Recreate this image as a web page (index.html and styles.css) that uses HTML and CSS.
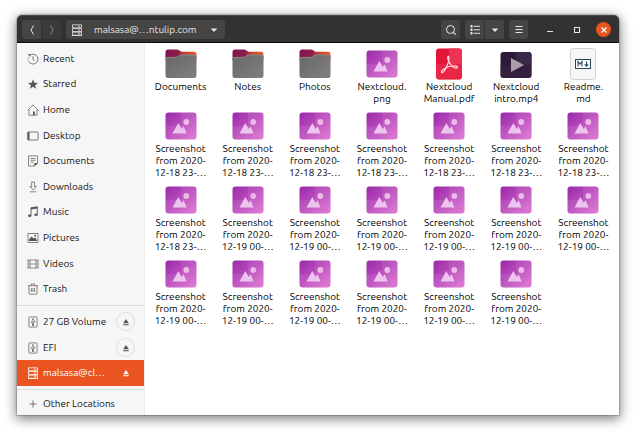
FILE: index.html
```
<!DOCTYPE html>
<html lang="en">
<head>
<meta charset="utf-8">
<meta name="viewport" content="width=device-width, initial-scale=1">
<title>Files</title>
<link rel="stylesheet" href="styles.css">
</head>
<body>
<svg class="sprite" aria-hidden="true">
  <defs>
    <linearGradient id="g-image" x1="0" y1="0" x2="1" y2="1"><stop offset="0" stop-color="#9a2baa"/><stop offset=".5" stop-color="#bb4cbd"/><stop offset="1" stop-color="#de73d2"/></linearGradient>
    <linearGradient id="g-tab" x1="0" y1="0" x2="1" y2="0"><stop offset="0" stop-color="#7c1550"/><stop offset=".4" stop-color="#8e1d4b"/><stop offset=".6" stop-color="#c4402f"/><stop offset="1" stop-color="#f05a1c"/></linearGradient>
    <linearGradient id="g-folder" x1="0" y1="0" x2="1" y2="1"><stop offset="0" stop-color="#676767"/><stop offset="1" stop-color="#808080"/></linearGradient>
  </defs>
  <symbol id="folder" viewBox="0 0 32 32">
    <path d="M.5 8V4q0-2.500 2.500-2.500H12q1.500 0 2.500 1t2.500 1.200h12q2.500 0 2.500 2.500v6H.5z" fill="url(#g-tab)"/>
    <path d="M.5 11.300q0-2.300 2.300-2.300H11q2 0 3-1.200t3-1.200h11.700Q31.500 6.600 31.500 9.100V27.500q0 2.500-2.500 2.500H3Q.5 30 .5 27.500z" fill="url(#g-folder)"/>
    <path d="M1 11.300q0-1.900 1.900-1.900H11q2.100 0 3.200-1.200T17 7h12q2 0 2 2" fill="none" stroke="#949494" stroke-width=".7"/>
  </symbol>
  <symbol id="image" viewBox="0 0 32 32">
    <rect x=".5" y="2.500" width="31" height="27" rx="3" fill="url(#g-image)"/>
    <path d="M16 2.500h12.500q3 0 3 3V16H16z" fill="#fff" opacity=".08"/>
    <path d="M.5 16h31v10.500q0 3-3 3h-25q-3 0-3-3z" fill="#fff" opacity=".08"/>
    <path d="M7.500 23.500 13.300 13l3.500 6 1.800-2.800 3 7.300z" fill="#edc4ed"/>
    <circle cx="21.300" cy="12" r="2.900" fill="#edb9e9"/>
  </symbol>
  <symbol id="pdf" viewBox="0 0 32 32">
    <rect x="3" y=".5" width="26" height="31" rx="3" fill="#e3163a"/>
    <path d="M16 .5h10q3 0 3 3V16H16z" fill="#ec3452"/><path d="M3 16h26v12.500q0 3-3 3H6q-3 0-3-3z" fill="#ef3650" opacity=".5"/>
    <path d="M15.200 8.300c-1.500 1 .5 7 4 10 2.500 2.200 5.300 2.500 5.200.7-.3-1.800-7.600-1.200-11.300.7-3.500 1.800-5.500 4-4.400 4.900 1.300.8 4.100-3.300 5.800-7.800 1.600-4.300 2-8.700.7-8.500z" fill="none" stroke="#ffe1e5" stroke-width="1.100"/>
  </symbol>
  <symbol id="video" viewBox="0 0 32 32">
    <rect x=".5" y="4" width="31" height="26" rx="3" fill="#2d1a39"/>
    <path d="M16 4h12.500q3 0 3 3v10H16z" fill="#3a2848"/><path d="M.5 17h31v10q0 3-3 3h-25q-3 0-3-3z" fill="#382440" opacity=".7"/>
    <path d="M11 10v14l13-7z" fill="#a99ead"/>
  </symbol>
  <symbol id="markdown" viewBox="0 0 32 32">
    <rect x="3.500" y=".5" width="25" height="31" rx="3" fill="#f6f6f6" stroke="#cfcfcf"/>
    <rect x="8.500" y="11.500" width="15" height="9" fill="#fff" stroke="#24475a"/>
    <path d="M11 18.500v-5l2 2.500 2-2.500v5M19.500 13.500v4M17.700 16.300l1.800 2 1.800-2" fill="none" stroke="#24475a" stroke-width="1.100"/>
  </symbol>
  <symbol id="server" viewBox="0 0 12 12">
    <path d="M1.500.8h9v3h-9zM1.500 4.500h9v3h-9zM1.500 8.200h9v3h-9zM7 2.300h2M7 6h2M7 9.700h2M1 11.500h10" fill="none" stroke="currentColor" stroke-width=".8"/>
  </symbol>
  <symbol id="recent" viewBox="0 0 12 12">
    <path d="M3.500 1.900A4.900 4.900 0 1 1 2.200 9.200" fill="none" stroke="currentColor" stroke-width=".8"/><path d="M2.200 9.200A4.900 4.900 0 0 1 2 3.500" fill="none" stroke="currentColor" stroke-width=".8" stroke-dasharray="1 1"/><path d="M.7 1.300h2.600v2.600z" fill="currentColor"/><path d="M6 3.300v3L7.300 8" fill="none" stroke="currentColor" stroke-width=".8"/>
  </symbol>
  <symbol id="star" viewBox="0 0 12 12"><path d="m6 1.200 1.300 3.500 3.700.2-2.900 2.300 1 3.600L6 8.800l-3.100 2 1-3.600L1 4.900l3.700-.2z" fill="currentColor"/></symbol>
  <symbol id="home" viewBox="0 0 12 12"><path d="M.5 6.500 6 1l5.500 5.500M2 5.500v5.700h8V5.500" fill="none" stroke="currentColor" stroke-width=".7"/><path d="M6 7.500h1.800V11H6z" fill="currentColor"/></symbol>
  <symbol id="desktop" viewBox="0 0 12 12"><rect x=".9" y="2" width="10.200" height="8" rx=".8" fill="none" stroke="currentColor" stroke-width=".8"/><path d="M.5 2h2v8h-2z" fill="currentColor"/></symbol>
  <symbol id="document" viewBox="0 0 12 12"><path d="M1.500.9h9v7.300L7.800 11H1.500zM3.500 3.500h5M3.500 5.300h5M3.500 7.200h3" fill="none" stroke="currentColor" stroke-width=".7"/><path d="M7.300 11.300V8h3.500z" fill="currentColor"/></symbol>
  <symbol id="download" viewBox="0 0 12 12"><path d="M4.700 1h2.800v4.500h1.800L6.100 9 2.900 5.500h1.800zM3 10.800h6.200" fill="none" stroke="currentColor" stroke-width=".7"/></symbol>
  <symbol id="music" viewBox="0 0 12 12"><path d="M4 9.500V1.800L10.300 1v7.500" fill="none" stroke="currentColor" stroke-width=".9"/><path d="m4 1.400 6.500-.9v2L4 3.400z" fill="currentColor"/><ellipse cx="2.700" cy="9.700" rx="1.700" ry="1.300" fill="currentColor"/><ellipse cx="9" cy="8.700" rx="1.700" ry="1.300" fill="currentColor"/></symbol>
  <symbol id="picture" viewBox="0 0 12 12"><path d="M1 1.500h10v9H1z" fill="none" stroke="currentColor" stroke-width=".7"/><path d="M2 9V7.500l2.600-3 2 2 1.200-1L10 8v1z" fill="currentColor"/><circle cx="8.200" cy="3.700" r=".9" fill="currentColor"/></symbol>
  <symbol id="film" viewBox="0 0 12 12"><path d="M1 1v10M11 1v10M3 1v10M9 1v10M3 2h6M3 6h6M3 10h6M1 3h2M1 6h2M1 9h2M9 3h2M9 6h2M9 9h2" fill="none" stroke="currentColor" stroke-width=".6"/></symbol>
  <symbol id="trash" viewBox="0 0 12 12"><path d="M1 2.700h10M4.300 2.500V1h3.400v1.500M2 2.700v7.500q0 1 1 1h6q1 0 1-1V2.700M4.400 5v4M6 5v4M7.600 5v4" fill="none" stroke="currentColor" stroke-width=".7"/></symbol>
  <symbol id="drive" viewBox="0 0 12 12"><rect x="1.900" y=".9" width="8.200" height="10.200" rx=".8" fill="none" stroke="currentColor" stroke-width=".7"/><path d="M6 3v6M4.300 5v1.500L6 7.500M7.700 4.500V6L6 7" fill="none" stroke="currentColor" stroke-width=".7"/><path d="M4.900 3.500 6 2l1.100 1.500z" fill="currentColor"/><circle cx="6" cy="9" r=".9" fill="currentColor"/></symbol>
  <symbol id="plus" viewBox="0 0 12 12"><path d="M6 2.500v7M2.500 6h7" stroke="currentColor" stroke-width=".8"/></symbol>
  <symbol id="eject" viewBox="0 0 12 12"><path d="M6 3 8.800 7.300H3.200zM3.200 8.200h5.600v1H3.200z" fill="currentColor"/></symbol>
  <symbol id="back" viewBox="0 0 12 12"><path d="M7.500 1.500 5 6l2.500 4.500" fill="none" stroke="currentColor"/></symbol>
  <symbol id="forward" viewBox="0 0 12 12"><path d="M4.500 1.500 7 6l-2.500 4.500" fill="none" stroke="currentColor"/></symbol>
  <symbol id="caret" viewBox="0 0 12 12"><path d="M2.700 4.500h6.600L6 8z" fill="currentColor"/></symbol>
  <symbol id="search" viewBox="0 0 12 12"><circle cx="5.500" cy="5.500" r="4" fill="none" stroke="currentColor"/><path d="m8.300 8.300 2.400 2.400" stroke="currentColor" stroke-width="1.200"/></symbol>
  <symbol id="list" viewBox="0 0 12 12"><path d="M1.500 1h2v2.500h-2zM1.500 4.500h2V7h-2zM1.500 8h2v2.500h-2z" fill="currentColor"/><path d="M4.500 2.300H11M4.500 5.800H11M4.500 9.300H11" stroke="currentColor"/></symbol>
  <symbol id="menu" viewBox="0 0 12 12"><path d="M2.500 2.500h7M2.500 5.500h7M2.500 8.500h7" stroke="currentColor"/></symbol>
  <symbol id="minimize" viewBox="0 0 12 12"><path d="M3 7.500h6" stroke="currentColor"/></symbol>
  <symbol id="maximize" viewBox="0 0 12 12"><path d="M3.500 3.500h5v5h-5z" fill="none" stroke="currentColor" stroke-width="1.100"/></symbol>
  <symbol id="close" viewBox="0 0 12 12"><path d="m3.500 3.500 5 5m0-5-5 5" stroke="currentColor" stroke-width="1.200"/></symbol>
</svg>

<div class="window">
  <header class="titlebar">
    <div class="group">
      <button class="tool" aria-label="Back"><svg class="icon"><use href="#back"/></svg></button>
      <button class="tool dim" aria-label="Forward"><svg class="icon"><use href="#forward"/></svg></button>
    </div>
    <button class="tool path"><svg class="icon"><use href="#server"/></svg><span>malsasa@…ntulip.com</span><svg class="icon"><use href="#caret"/></svg></button>
    <div class="spacer"></div>
    <button class="tool" aria-label="Search"><svg class="icon"><use href="#search"/></svg></button>
    <div class="group">
      <button class="tool" aria-label="List view"><svg class="icon"><use href="#list"/></svg></button>
      <button class="tool" aria-label="View options"><svg class="icon"><use href="#caret"/></svg></button>
    </div>
    <button class="tool" aria-label="Menu"><svg class="icon"><use href="#menu"/></svg></button>
    <div class="controls">
      <button class="control" aria-label="Minimize"><svg class="icon"><use href="#minimize"/></svg></button>
      <button class="control" aria-label="Maximize"><svg class="icon"><use href="#maximize"/></svg></button>
      <button class="control close" aria-label="Close"><svg class="icon"><use href="#close"/></svg></button>
    </div>
  </header>
  <div class="content">
    <nav class="sidebar">
      <ul class="places">
        <li class="place"><a href="#"><svg class="icon"><use href="#recent"/></svg>Recent</a></li>
        <li class="place"><a href="#"><svg class="icon"><use href="#star"/></svg>Starred</a></li>
        <li class="place"><a href="#"><svg class="icon"><use href="#home"/></svg>Home</a></li>
        <li class="place"><a href="#"><svg class="icon"><use href="#desktop"/></svg>Desktop</a></li>
        <li class="place"><a href="#"><svg class="icon"><use href="#document"/></svg>Documents</a></li>
        <li class="place"><a href="#"><svg class="icon"><use href="#download"/></svg>Downloads</a></li>
        <li class="place"><a href="#"><svg class="icon"><use href="#music"/></svg>Music</a></li>
        <li class="place"><a href="#"><svg class="icon"><use href="#picture"/></svg>Pictures</a></li>
        <li class="place"><a href="#"><svg class="icon"><use href="#film"/></svg>Videos</a></li>
        <li class="place"><a href="#"><svg class="icon"><use href="#trash"/></svg>Trash</a></li>
      </ul>
      <ul class="volumes">
        <li class="place"><a href="#"><svg class="icon"><use href="#drive"/></svg>27 GB Volume</a><button class="eject" aria-label="Eject 27 GB Volume"><svg class="icon"><use href="#eject"/></svg></button></li>
        <li class="place"><a href="#"><svg class="icon"><use href="#drive"/></svg>EFI</a><button class="eject" aria-label="Eject EFI"><svg class="icon"><use href="#eject"/></svg></button></li>
        <li class="place selected"><a href="#"><svg class="icon"><use href="#server"/></svg>malsasa@cl…</a><button class="eject" aria-label="Disconnect"><svg class="icon"><use href="#eject"/></svg></button></li>
      </ul>
      <ul class="other">
        <li class="place"><a href="#"><svg class="icon"><use href="#plus"/></svg>Other Locations</a></li>
      </ul>
    </nav>
    <main class="files">
      <figure class="file"><svg class="thumb"><use href="#folder"/></svg><figcaption>Documents</figcaption></figure>
      <figure class="file"><svg class="thumb"><use href="#folder"/></svg><figcaption>Notes</figcaption></figure>
      <figure class="file"><svg class="thumb"><use href="#folder"/></svg><figcaption>Photos</figcaption></figure>
      <figure class="file"><svg class="thumb"><use href="#image"/></svg><figcaption>Nextcloud.<br>png</figcaption></figure>
      <figure class="file"><svg class="thumb"><use href="#pdf"/></svg><figcaption>Nextcloud<br>Manual.pdf</figcaption></figure>
      <figure class="file"><svg class="thumb"><use href="#video"/></svg><figcaption>Nextcloud<br>intro.mp4</figcaption></figure>
      <figure class="file"><svg class="thumb"><use href="#markdown"/></svg><figcaption>Readme.<br>md</figcaption></figure>

      <figure class="file"><svg class="thumb"><use href="#image"/></svg><figcaption>Screenshot<br>from 2020-<br>12-18 23-…</figcaption></figure>
      <figure class="file"><svg class="thumb"><use href="#image"/></svg><figcaption>Screenshot<br>from 2020-<br>12-18 23-…</figcaption></figure>
      <figure class="file"><svg class="thumb"><use href="#image"/></svg><figcaption>Screenshot<br>from 2020-<br>12-18 23-…</figcaption></figure>
      <figure class="file"><svg class="thumb"><use href="#image"/></svg><figcaption>Screenshot<br>from 2020-<br>12-18 23-…</figcaption></figure>
      <figure class="file"><svg class="thumb"><use href="#image"/></svg><figcaption>Screenshot<br>from 2020-<br>12-18 23-…</figcaption></figure>
      <figure class="file"><svg class="thumb"><use href="#image"/></svg><figcaption>Screenshot<br>from 2020-<br>12-18 23-…</figcaption></figure>
      <figure class="file"><svg class="thumb"><use href="#image"/></svg><figcaption>Screenshot<br>from 2020-<br>12-18 23-…</figcaption></figure>

      <figure class="file"><svg class="thumb"><use href="#image"/></svg><figcaption>Screenshot<br>from 2020-<br>12-18 23-…</figcaption></figure>
      <figure class="file"><svg class="thumb"><use href="#image"/></svg><figcaption>Screenshot<br>from 2020-<br>12-19 00-…</figcaption></figure>
      <figure class="file"><svg class="thumb"><use href="#image"/></svg><figcaption>Screenshot<br>from 2020-<br>12-19 00-…</figcaption></figure>
      <figure class="file"><svg class="thumb"><use href="#image"/></svg><figcaption>Screenshot<br>from 2020-<br>12-19 00-…</figcaption></figure>
      <figure class="file"><svg class="thumb"><use href="#image"/></svg><figcaption>Screenshot<br>from 2020-<br>12-19 00-…</figcaption></figure>
      <figure class="file"><svg class="thumb"><use href="#image"/></svg><figcaption>Screenshot<br>from 2020-<br>12-19 00-…</figcaption></figure>
      <figure class="file"><svg class="thumb"><use href="#image"/></svg><figcaption>Screenshot<br>from 2020-<br>12-19 00-…</figcaption></figure>

      <figure class="file"><svg class="thumb"><use href="#image"/></svg><figcaption>Screenshot<br>from 2020-<br>12-19 00-…</figcaption></figure>
      <figure class="file"><svg class="thumb"><use href="#image"/></svg><figcaption>Screenshot<br>from 2020-<br>12-19 00-…</figcaption></figure>
      <figure class="file"><svg class="thumb"><use href="#image"/></svg><figcaption>Screenshot<br>from 2020-<br>12-19 00-…</figcaption></figure>
      <figure class="file"><svg class="thumb"><use href="#image"/></svg><figcaption>Screenshot<br>from 2020-<br>12-19 00-…</figcaption></figure>
      <figure class="file"><svg class="thumb"><use href="#image"/></svg><figcaption>Screenshot<br>from 2020-<br>12-19 00-…</figcaption></figure>
      <figure class="file"><svg class="thumb"><use href="#image"/></svg><figcaption>Screenshot<br>from 2020-<br>12-19 00-…</figcaption></figure>
    </main>
  </div>
</div>
</body>
</html>
```

FILE: styles.css
```
* {
  box-sizing: border-box;
}

body {
  margin: 0;
  min-height: 100vh;
  padding: 15px 18px 20px 17px;
  display: flex;
  background: #fff;
  font: 10px/12px Ubuntu, "Noto Sans", sans-serif;
  color: #111;
}

.sprite {
  position: absolute;
  width: 0;
  height: 0;
}

button {
  border: 0;
  padding: 0;
  margin: 0;
  font: inherit;
  color: inherit;
  background: none;
}

ul {
  list-style: none;
  margin: 0;
  padding: 0;
}

.icon {
  width: 12px;
  height: 12px;
  flex: none;
}

.window {
  flex: 1;
  min-width: 0;
  display: flex;
  flex-direction: column;
  border-radius: 5px 5px 0 0;
  box-shadow: 0 0 1px 1px rgba(0, 0, 0, .18), 0 3px 12px 1px rgba(0, 0, 0, .5);
}

.titlebar {
  display: flex;
  align-items: center;
  gap: 5px;
  height: 28px;
  padding: 1px 8px 0 5px;
  background: #343131;
  border-top: 1px solid #4b4949;
  border-bottom: 1px solid #0c0c0c;
  border-radius: 5px 5px 0 0;
  color: #e6e6e4;
}

.group {
  display: flex;
  gap: 1px;
}

.tool {
  display: flex;
  align-items: center;
  justify-content: center;
  width: 19px;
  height: 19px;
  border-radius: 3px;
  background: #474543;
}

.group .tool:first-child {
  border-radius: 3px 0 0 3px;
}

.group .tool:last-child {
  border-radius: 0 3px 3px 0;
}

.tool.dim {
  background: #3c3a39;
  color: #8b8b89;
}

.tool.path {
  width: auto;
  padding: 0 5px;
  gap: 11px;
}

.spacer {
  flex: 1;
}

.controls {
  display: flex;
  gap: 12px;
  padding-left: 9px;
}

.control {
  display: grid;
  place-items: center;
  width: 15px;
  height: 15px;
  border-radius: 50%;
}

.control.close {
  background: #e95420;
  color: #fff;
}

.content {
  flex: 1;
  display: flex;
  background: #fff;
}

.sidebar {
  width: 128px;
  flex: none;
  display: flex;
  flex-direction: column;
  padding-top: 3px;
  background: #f6f6f6;
  border-right: 1px solid #ececec;
}

.places,
.volumes {
  display: flex;
  flex-direction: column;
}

.places {
  flex: 10 1 0;
}

.volumes {
  flex: 3 1 0;
}

.volumes,
.other {
  margin-top: 3px;
  padding-top: 3px;
  border-top: 1px solid #dcdcdc;
}

.place {
  flex: 1;
  display: flex;
  align-items: center;
  padding: 0 9px 0 10px;
}

.place a {
  flex: 1;
  display: flex;
  align-items: center;
  gap: 4px;
  color: inherit;
  text-decoration: none;
  white-space: nowrap;
}

.place .icon {
  color: #555;
}

.other .place {
  height: 22px;
}

.eject {
  display: grid;
  place-items: center;
  width: 19px;
  height: 19px;
  border: 1px solid #dedede;
  border-radius: 50%;
}

.selected {
  background: #e95420;
  color: #fff;
}

.place.selected .icon {
  color: #fff;
}

.selected .eject {
  border-color: transparent;
}

.files {
  flex: 1;
  display: grid;
  grid-template-columns: repeat(7, 1fr);
  align-content: start;
  row-gap: 5px;
  padding: 5px 2px 0;
}

.file {
  display: flex;
  flex-direction: column;
  align-items: center;
  gap: 1px;
  margin: 0;
  text-align: center;
  white-space: nowrap;
  color: #000;
}

.thumb {
  width: 32px;
  height: 32px;
}
```
